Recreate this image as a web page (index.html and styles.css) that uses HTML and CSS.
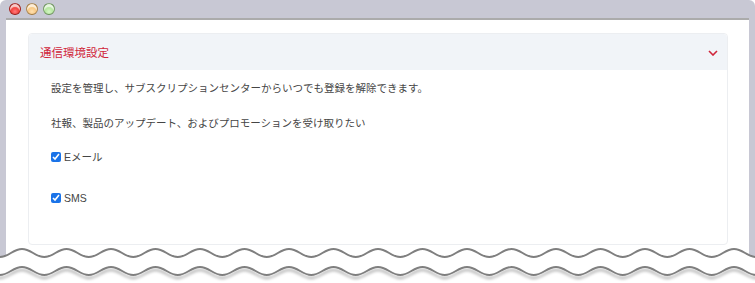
FILE: index.html
```html
<!DOCTYPE html>
<html lang="ja">
<head>
    <meta charset="UTF-8">
    <meta name="viewport" content="width=device-width, initial-scale=1.0">
    <title>通信環境設定</title>
    <link rel="stylesheet" href="styles.css">
</head>
<body>
    <div class="window">
        <!-- タイトルバー -->
        <div class="titlebar">
            <span class="dot dot-red"></span>
            <span class="dot dot-orange"></span>
            <span class="dot dot-green"></span>
        </div>

        <div class="frame">
            <div class="screen">
                <div class="card">
                    <div class="card-header">
                        <span class="card-title">通信環境設定</span>
                        <svg class="chevron" width="10" height="6" viewBox="0 0 10 6">
                            <path d="M1 1 L5 5 L9 1" fill="none" stroke="#d0253a" stroke-width="1.6"/>
                        </svg>
                    </div>
                    <div class="card-body">
                        <p class="note">設定を管理し、サブスクリプションセンターからいつでも登録を解除できます。</p>
                        <p class="question">社報、製品のアップデート、およびプロモーションを受け取りたい</p>
                        <label class="option option-email"><input type="checkbox" checked> Eメール</label>
                        <label class="option option-sms"><input type="checkbox" checked> SMS</label>
                    </div>
                </div>
            </div>
        </div>

        <!-- 切り取り線 -->
        <svg class="torn" width="755" height="43" viewBox="0 0 755 43">
            <defs>
                <filter id="shadow" x="-5%" y="-50%" width="110%" height="250%">
                    <feDropShadow dx="0" dy="3" stdDeviation="1.6" flood-color="#000" flood-opacity="0.35"/>
                </filter>
            </defs>
            <path fill="#fff" d="M-22.5 9c8.9 0 13.35 8 22.25 8s13.35-8 22.25-8s13.35 8 22.25 8s13.35-8 22.25-8s13.35 8 22.25 8s13.35-8 22.25-8s13.35 8 22.25 8s13.35-8 22.25-8s13.35 8 22.25 8s13.35-8 22.25-8s13.35 8 22.25 8s13.35-8 22.25-8s13.35 8 22.25 8s13.35-8 22.25-8s13.35 8 22.25 8s13.35-8 22.25-8s13.35 8 22.25 8s13.35-8 22.25-8s13.35 8 22.25 8s13.35-8 22.25-8s13.35 8 22.25 8s13.35-8 22.25-8s13.35 8 22.25 8s13.35-8 22.25-8s13.35 8 22.25 8s13.35-8 22.25-8s13.35 8 22.25 8s13.35-8 22.25-8s13.35 8 22.25 8s13.35-8 22.25-8s13.35 8 22.25 8s13.35-8 22.25-8s13.35 8 22.25 8s13.35-8 22.25-8s13.35 8 22.25 8s13.35-8 22.25-8V43H-22.5Z"/>
            <path class="wave" d="M-22.5 9c8.9 0 13.35 8 22.25 8s13.35-8 22.25-8s13.35 8 22.25 8s13.35-8 22.25-8s13.35 8 22.25 8s13.35-8 22.25-8s13.35 8 22.25 8s13.35-8 22.25-8s13.35 8 22.25 8s13.35-8 22.25-8s13.35 8 22.25 8s13.35-8 22.25-8s13.35 8 22.25 8s13.35-8 22.25-8s13.35 8 22.25 8s13.35-8 22.25-8s13.35 8 22.25 8s13.35-8 22.25-8s13.35 8 22.25 8s13.35-8 22.25-8s13.35 8 22.25 8s13.35-8 22.25-8s13.35 8 22.25 8s13.35-8 22.25-8s13.35 8 22.25 8s13.35-8 22.25-8s13.35 8 22.25 8s13.35-8 22.25-8s13.35 8 22.25 8s13.35-8 22.25-8s13.35 8 22.25 8s13.35-8 22.25-8s13.35 8 22.25 8s13.35-8 22.25-8s13.35 8 22.25 8s13.35-8 22.25-8"/>
            <path class="wave" filter="url(#shadow)" d="M-22.5 27c8.9 0 13.35 8 22.25 8s13.35-8 22.25-8s13.35 8 22.25 8s13.35-8 22.25-8s13.35 8 22.25 8s13.35-8 22.25-8s13.35 8 22.25 8s13.35-8 22.25-8s13.35 8 22.25 8s13.35-8 22.25-8s13.35 8 22.25 8s13.35-8 22.25-8s13.35 8 22.25 8s13.35-8 22.25-8s13.35 8 22.25 8s13.35-8 22.25-8s13.35 8 22.25 8s13.35-8 22.25-8s13.35 8 22.25 8s13.35-8 22.25-8s13.35 8 22.25 8s13.35-8 22.25-8s13.35 8 22.25 8s13.35-8 22.25-8s13.35 8 22.25 8s13.35-8 22.25-8s13.35 8 22.25 8s13.35-8 22.25-8s13.35 8 22.25 8s13.35-8 22.25-8s13.35 8 22.25 8s13.35-8 22.25-8s13.35 8 22.25 8s13.35-8 22.25-8s13.35 8 22.25 8s13.35-8 22.25-8"/>
        </svg>
    </div>
</body>
</html>
```

FILE: styles.css
```css
/* ページ全体 */
body {
    margin: 0;
    background: #ffffff;
    font-family: "Liberation Sans", "Noto Sans CJK JP", sans-serif;
    color: #454545;
}
.window {
    position: relative;
    width: 755px;
    height: 283px;
    overflow: hidden;
}
.titlebar {
    height: 18px;
    background: #c8c8d4;
    border-radius: 6px 6px 0 0;
    display: flex;
    align-items: center;
    gap: 5px;
    padding-left: 9px;
}
.dot {
    width: 10px;
    height: 10px;
    border-radius: 50%;
    border: 0.5px solid rgba(0, 0, 0, 0.3);
}
.dot-red {
    background: radial-gradient(circle at 50% 75%, #ff7a7a 0%, #f0302a 55%, #c81a14 100%);
    box-shadow: inset 0 3px 1px rgba(255, 255, 255, 0.75);
}
.dot-orange {
    background: radial-gradient(circle at 50% 75%, #ffe0b0 0%, #f6bf70 60%, #d9993a 100%);
    box-shadow: inset 0 3px 1px rgba(255, 255, 255, 0.75);
}
.dot-green {
    background: radial-gradient(circle at 50% 75%, #d4f6c4 0%, #a8e090 60%, #80bb66 100%);
    box-shadow: inset 0 3px 1px rgba(255, 255, 255, 0.75);
}
.frame {
    background: #c8c8d4;
    padding: 0 6px;
    height: 265px;
}
.screen {
    background: #ffffff;
    border-top: 2px solid #ababab;
    height: 263px;
    padding-top: 13px;
    box-sizing: border-box;
}
.card {
    margin: 0 21px 0 22px;
    border: 1px solid #eceef1;
    border-radius: 4px;
}
.card-header {
    height: 36px;
    background: #f1f4f8;
    display: flex;
    align-items: center;
    justify-content: space-between;
    padding: 0 9px 0 11px;
    border-radius: 4px 4px 0 0;
}
.card-title {
    font-size: 11.5px;
    color: #d0253a;
}
.chevron {
    display: block;
    margin-top: 1px;
}
.card-body {
    padding: 10px 22px 38px;
    font-size: 10.5px;
    line-height: 16px;
}
.note {
    margin: 0 0 19px;
}
.question {
    margin: 0 0 18px;
}
.option {
    display: flex;
    align-items: center;
    gap: 3px;
}
.option input {
    width: 10px;
    height: 10px;
    margin: 0;
    accent-color: #1a73e8;
}
.option-sms {
    margin-top: 25px;
}
.torn {
    position: absolute;
    left: 0;
    top: 240px;
    display: block;
}
.wave {
    fill: none;
    stroke: #7f7f7f;
    stroke-width: 2;
}
```
